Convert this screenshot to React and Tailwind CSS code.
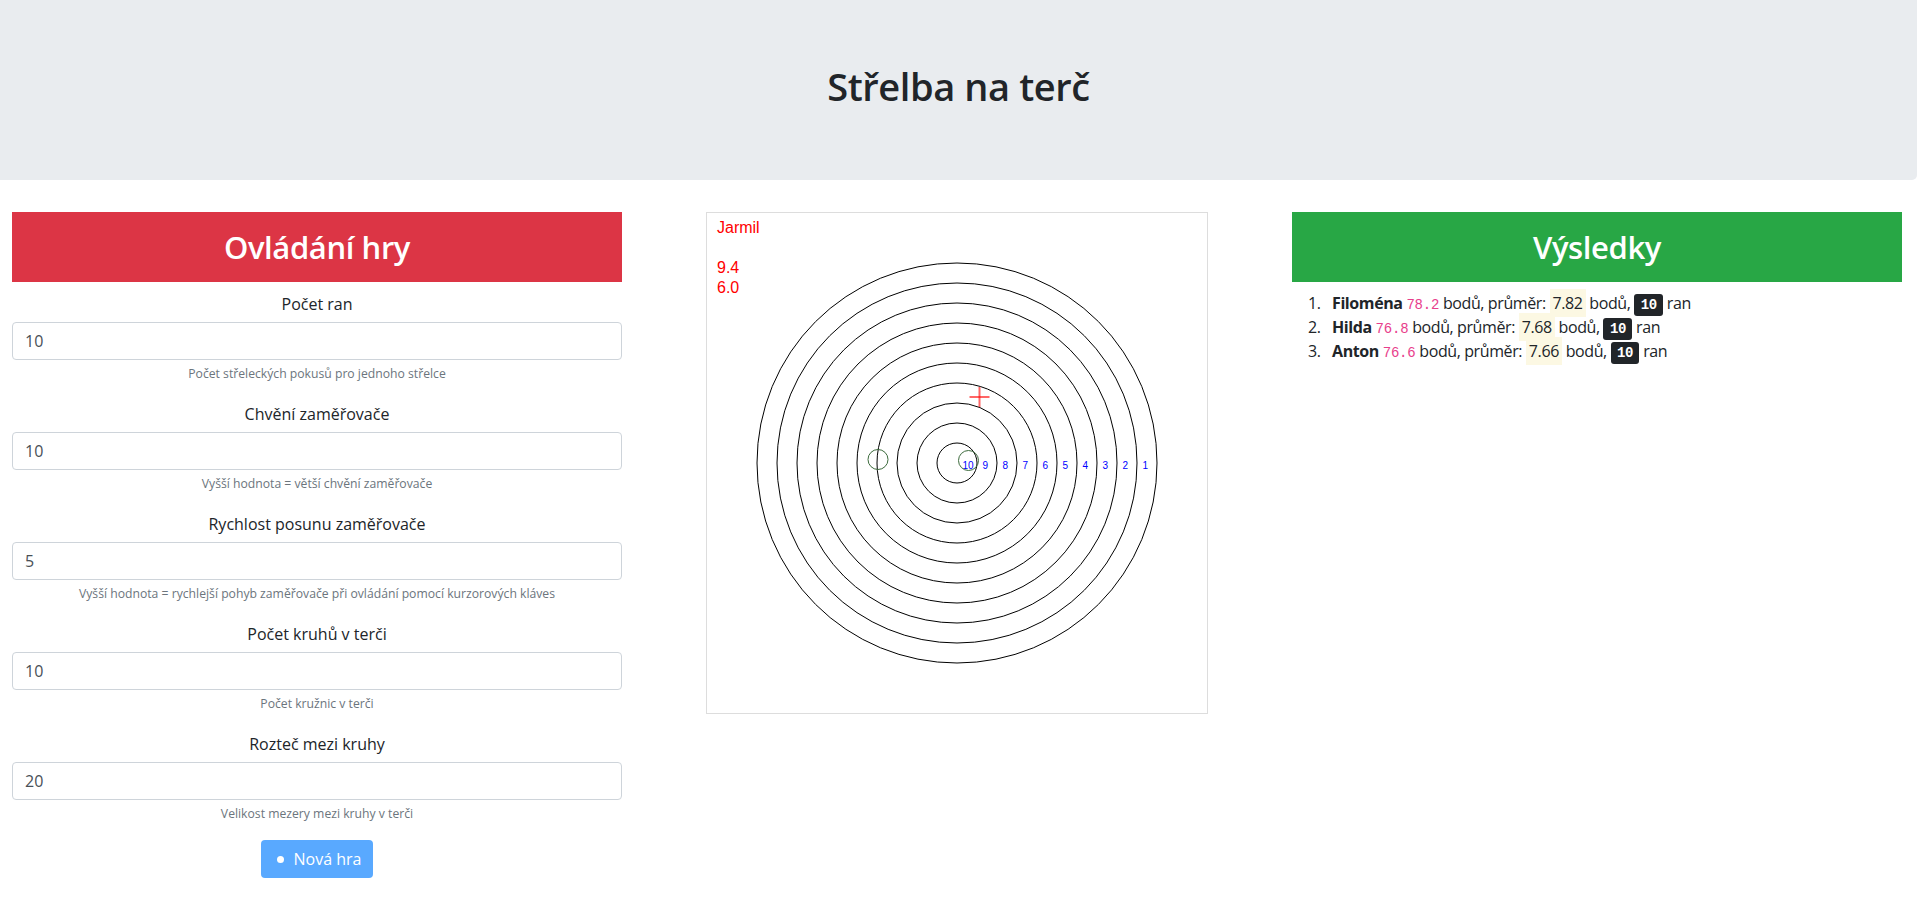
import React from "react";

const groups = [
  { label: "Počet ran", value: "10", help: "Počet střeleckých pokusů pro jednoho střelce" },
  { label: "Chvění zaměřovače", value: "10", help: "Vyšší hodnota = větší chvění zaměřovače" },
  { label: "Rychlost posunu zaměřovače", value: "5", help: "Vyšší hodnota = rychlejší pohyb zaměřovače při ovládání pomocí kurzorových kláves" },
  { label: "Počet kruhů v terči", value: "10", help: "Počet kružnic v terči" },
  { label: "Rozteč mezi kruhy", value: "20", help: "Velikost mezery mezi kruhy v terči" },
];

const results = [
  { name: "Filoména", total: "78.2", avg: "7.82", shots: "10" },
  { name: "Hilda", total: "76.8", avg: "7.68", shots: "10" },
  { name: "Anton", total: "76.6", avg: "7.66", shots: "10" },
];

function Target() {
  const rings = [10, 9, 8, 7, 6, 5, 4, 3, 2, 1];
  return (
    <svg width="500" height="500" viewBox="0 0 500 500" className="block">
      <g fontFamily="'Liberation Sans', Arial, sans-serif">
        <text x="10" y="20" fontSize="16" fill="#ff0000">Jarmil</text>
        <text x="10" y="60" fontSize="16" fill="#ff0000">9.4</text>
        <text x="10" y="80" fontSize="16" fill="#ff0000">6.0</text>
      </g>
      {rings.map((k) => (
        <circle key={k} cx="250" cy="250" r={(11 - k) * 20} fill="none" stroke="#000" strokeWidth="1" />
      ))}
      {rings.map((k) => (
        <text
          key={"t" + k}
          x={255.5 + (10 - k) * 20}
          y="255.5"
          fontSize="10"
          fill="#0000ff"
          fontFamily="'Liberation Sans', Arial, sans-serif"
        >
          {k}
        </text>
      ))}
      <circle cx="171" cy="246.5" r="10" fill="none" stroke="#3d6b3d" strokeWidth="1" />
      <circle cx="261.5" cy="247.5" r="10" fill="none" stroke="#3d6b3d" strokeWidth="1" />
      <g stroke="#ff0000" strokeOpacity="0.6" strokeWidth="2">
        <line x1="262.5" y1="184" x2="282.5" y2="184" />
        <line x1="272.5" y1="174" x2="272.5" y2="194" />
      </g>
    </svg>
  );
}

export default function App() {
  return (
    <div className="min-h-screen bg-white text-[#212529] font-['Segoe_UI','Open_Sans',sans-serif] text-[16px] leading-[24px]">
      <div className="h-[180px] bg-[#e9ecef] rounded-br-[5px] pt-[62px] mb-[32px]">
        <h1 className="text-center text-[38px] leading-[48px] font-semibold tracking-[-0.4px]">Střelba na terč</h1>
      </div>

      <div className="grid grid-cols-[610px_1fr_610px] pl-[12px] pr-[15px]">
        <div>
          <h2 className="bg-[#dc3545] text-white text-center text-[31px] leading-[38px] font-semibold tracking-[-0.4px] py-[16px] mb-[8px]">
            Ovládání hry
          </h2>
          {groups.map((g) => (
            <div key={g.label} className="mb-[16px]">
              <div className="text-center pt-[2px] mb-[6px]">{g.label}</div>
              <input
                type="text"
                defaultValue={g.value}
                className="block w-full h-[38px] px-[12px] py-[6px] border border-[#ced4da] rounded-[4px] text-[#495057] text-[16px] outline-none bg-white"
              />
              <div className="text-center text-[12.2px] leading-[20px] text-[#6c757d] mt-[4px]">{g.help}</div>
            </div>
          ))}
          <div className="flex justify-center">
            <button className="flex items-center h-[38px] px-[12px] rounded-[4px] bg-[#59a9ff] text-white text-[16px]">
              <span className="w-[16px] h-[16px] flex items-center justify-center">
                <span className="w-[7px] h-[7px] rounded-full bg-white"></span>
              </span>
              <span className="ml-[5px]">Nová hra</span>
            </button>
          </div>
        </div>

        <div className="flex justify-center">
          <div className="border border-[#dddddd] h-fit">
            <Target />
          </div>
        </div>

        <div>
          <h2 className="bg-[#28a745] text-white text-center text-[31px] leading-[38px] font-semibold tracking-[-0.4px] py-[16px] mb-[8px]">
            Výsledky
          </h2>
          <ol className="list-none pl-[40px] pt-[1px]">
            {results.map((r, i) => (
              <li key={r.name} className="h-[24px] tracking-[-0.4px] whitespace-nowrap">
                <span className="inline-block w-[24px] -ml-[24px]">{i + 1}.</span>
                <b className="font-bold">{r.name}</b>{" "}
                <code className="font-['Liberation_Mono',monospace] text-[14px] leading-[16px] tracking-[-0.2px] text-[#e83e8c]">{r.total}</code>{" "}
                bodů, průměr: <mark className="bg-[#fcf8e3] text-[#212529] px-[3px] py-[3.2px] leading-[16px]">{r.avg}</mark>{" "}
                bodů,{" "}
                <kbd className="font-['Liberation_Mono',monospace] text-[14px] leading-[16px] tracking-[-0.4px] font-bold bg-[#212529] text-white px-[6.4px] py-[3.2px] rounded-[3px]">
                  {r.shots}
                </kbd>{" "}
                ran
              </li>
            ))}
          </ol>
        </div>
      </div>
    </div>
  );
}
